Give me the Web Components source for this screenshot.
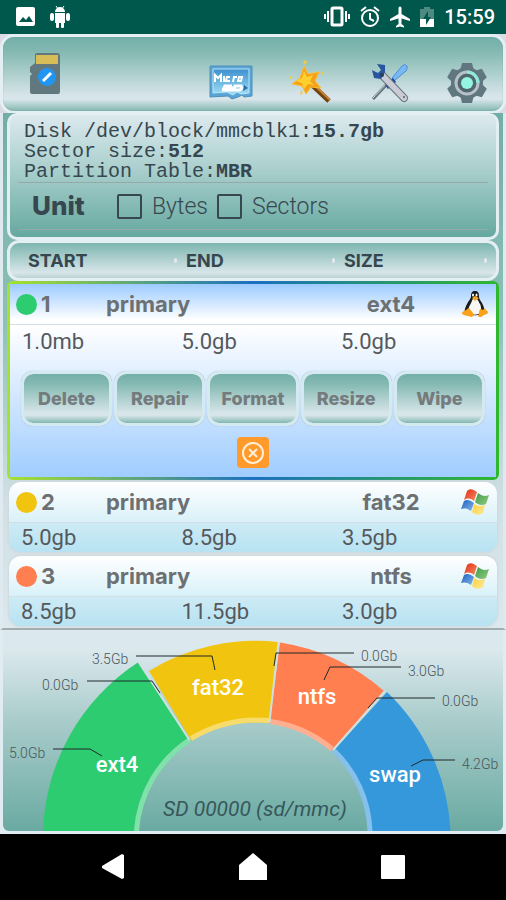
<!DOCTYPE html>
<html lang="en">
<head>
<meta charset="utf-8">
<meta name="viewport" content="width=device-width, initial-scale=1">
<title>Partitions</title>
<style>
  :root {
    --teal: #6caea5;
    --pale: #d9e6ec;
    --line: #e4eff4;
    --heading: Inter, 'Open Sans', sans-serif;
    --body: Roboto, 'Liberation Sans', sans-serif;
    --mono: 'Liberation Mono', 'DejaVu Sans Mono', monospace;
    --glass: linear-gradient(#73afa9 0%, #84b9b2 20%, #d5e4e8 78%, #d9e6ec 84%, #83b7b0 100%);
  }
  body {
    margin: 0;
    background: #000;
    font-family: var(--body);
    color: #37474f;
  }
</style>
</head>
<body>
<partition-app>
  <status-bar slot="status" time="15:59"></status-bar>
  <tool-bar slot="toolbar"></tool-bar>
  <disk-info path="/dev/block/mmcblk1" size="15.7gb" sector="512" table="MBR"></disk-info>
  <table-head></table-head>
  <partition-card number="1" type="primary" fs="ext4" color="#2ecc71" start="1.0mb" end="5.0gb" size="5.0gb" open>
    <action-button>Delete</action-button>
    <action-button>Repair</action-button>
    <action-button>Format</action-button>
    <action-button>Resize</action-button>
    <action-button>Wipe</action-button>
  </partition-card>
  <partition-card number="2" type="primary" fs="fat32" color="#f1c40f" start="5.0gb" end="8.5gb" size="3.5gb"></partition-card>
  <partition-card number="3" type="primary" fs="ntfs" color="#ff7f50" start="8.5gb" end="11.5gb" size="3.0gb"></partition-card>
  <usage-chart slot="chart">SD 00000 (sd/mmc)</usage-chart>
  <nav-bar slot="nav"></nav-bar>
</partition-app>

<script>
const TUX = `
  <svg viewBox="0 0 28 28" width="28" height="28" aria-hidden="true">
    <path d="M14 1c-3 0-4 2-4 5 0 3-2 4-4 8-2 4-3 7-2 9 2 3 17 3 19 0 1-3 0-6-2-10-2-3-3-4-3-7s-1-5-4-5z" fill="#17191c"/>
    <path d="M13 8c-2 1-2 4-4 7-2 3-2 7 1 9 2 1 7 1 9-1 2-3 1-7 0-9-2-3-2-6-6-6z" fill="#f7f7f5"/>
    <ellipse cx="12" cy="5" rx="1" ry="1.500" fill="#fff"/>
    <ellipse cx="15.500" cy="5" rx="1" ry="1.500" fill="#fff"/>
    <path d="M11 8l3-2 4 2-4 3z" fill="#f5a51d"/>
    <path d="M6 19c-1 2-5 2-5 4 0 3 6 2 9 4 2 0 3-2 2-4l-4-5z" fill="#faa21b"/>
    <path d="M20 19c-2-1-2 6-3 7 1 2 4 1 6-1 2-1 4-1 4-3 0-1-2-1-3-4-1 2-3 2-4 1z" fill="#faa21b"/>
  </svg>`;

const FLAG = `
  <svg viewBox="0 0 28 28" width="28" height="28" aria-hidden="true">
    <defs>
      <linearGradient id="r" x2="1" y2="1"><stop stop-color="#e02e18"/><stop offset="1" stop-color="#f7885f"/></linearGradient>
      <linearGradient id="g" x2="1" y2="1"><stop stop-color="#3d9c45"/><stop offset="1" stop-color="#93cb82"/></linearGradient>
      <linearGradient id="b" x2="1" y2="1"><stop stop-color="#1c5fbd"/><stop offset="1" stop-color="#86b8ea"/></linearGradient>
      <linearGradient id="y" x2="1" y2="1"><stop stop-color="#ffd23a"/><stop offset="1" stop-color="#fbe99c"/></linearGradient>
    </defs>
    <path d="M6 3c3-3 6-2 10 1l-3 9c-4-3-7-3-10-1z" fill="url(#r)"/>
    <path d="M17 5c4 3 7 4 11 2l-3 9c-4 2-8 1-11-2z" fill="url(#g)"/>
    <path d="M3 13c3-2 6-1 10 2l-3 8c-4-3-7-3-10-2z" fill="url(#b)"/>
    <path d="M13 16c3 2 7 3 11 1l-2 8c-4 3-8 2-11-1z" fill="url(#y)"/>
  </svg>`;

/** Small helper: every element keeps its markup in an open shadow root. */
class BaseElement extends HTMLElement {
  connectedCallback() {
    if (!this.shadowRoot) {
      this.attachShadow({ mode: 'open' }).innerHTML = this.render();
    }
  }

  attr(name) {
    return this.getAttribute(name) || '';
  }
}

class PartitionApp extends BaseElement {
  render() {
    return `
      <style>
        :host {
          display: flex;
          flex-direction: column;
          min-height: 100vh;
        }
        .toolbar {
          background: #d9dde3;
          margin-bottom: -1px;
        }
        main {
          display: flex;
          flex-direction: column;
          padding: 0 4px;
          border: solid #dfeaf0;
          border-width: 0 3px;
          border-bottom: 2px solid #a4acb0;
          background: linear-gradient(#72ada7, #8cc0b8 40%, #cfe0e5 75%, #dbe8ed);
        }
        ::slotted([slot="nav"]) { flex: 1; }
      </style>
      <slot name="status"></slot>
      <div class="toolbar"><slot name="toolbar"></slot></div>
      <main><slot></slot></main>
      <slot name="chart"></slot>
      <slot name="nav"></slot>`;
  }
}

class StatusBar extends BaseElement {
  render() {
    return `
      <style>
        :host {
          display: flex;
          align-items: center;
          gap: 10px;
          height: 34px;
          padding: 0 11px 0 15px;
          background: #00574b;
          color: #fff;
          box-sizing: border-box;
        }
        .gap { flex: 1; }
        time { font-size: 20px; font-weight: 500; line-height: 34px; }
        svg { display: block; }
      </style>
      <svg width="24" height="20" viewBox="0 0 24 20" aria-hidden="true">
        <rect x="1" width="19" height="19" rx="2" fill="#fff"/>
        <path d="M4 15l4-5 3 3 3-4 4 6z" fill="#00574b"/>
      </svg>
      <svg width="22" height="22" viewBox="0 0 22 22" fill="#fff" aria-hidden="true">
        <path d="M6 6a5 5 0 0 1 10 0zM6 7h10v10H6z"/>
        <path d="M7 0l2 3M15 0l-2 3" stroke="#fff"/>
        <rect x="1" y="7" width="4" height="8" rx="2"/><rect x="17" y="7" width="4" height="8" rx="2"/>
        <rect x="7" y="15" width="3" height="7" rx="1"/><rect x="12" y="15" width="3" height="7" rx="1"/>
      </svg>
      <span class="gap"></span>
      <svg width="26" height="22" viewBox="0 0 26 22" fill="none" stroke="#fff" stroke-width="2" aria-hidden="true">
        <rect x="8" y="2" width="10" height="17" rx="1" stroke-width="3"/>
        <path d="M4 5v11M1 8v5M22 5v11M25 8v5"/>
      </svg>
      <svg width="20" height="22" viewBox="0 0 20 22" fill="none" stroke="#fff" stroke-width="2" aria-hidden="true">
        <circle cx="10" cy="12" r="8"/><path d="M10 7v6l4 2M1 5l5-4M19 5l-5-4"/>
      </svg>
      <svg width="20" height="22" viewBox="0 0 20 22" fill="#fff" aria-hidden="true">
        <path d="M8.500 2a1.500 1.500 0 0 1 3 0v6l8.500 5v2l-8.500-2.500V18l2.500 2v1.500L10 20.500 6 21.500V20l2.500-2v-5.500L0 15v-2l8.500-5z"/>
      </svg>
      <svg width="14" height="22" viewBox="0 0 14 22" aria-hidden="true">
        <path d="M4 1h6v2h4v10H0V3h4z" fill="#4d8a81"/>
        <path d="M0 13h14v8H0z" fill="#fff"/>
        <path d="M8 5l-5 8h3v6l5-8H8z" fill="#00574b"/>
      </svg>
      <time>${this.attr('time')}</time>`;
  }
}

class ToolBar extends BaseElement {
  render() {
    return `
      <style>
        :host {
          display: flex;
          align-items: center;
          height: 80px;
          padding: 0 14px 0 24px;
          box-sizing: border-box;
          border: 3px solid var(--line);
          border-radius: 14px;
          background: var(--glass);
          box-shadow: inset 0 0 1px #5b8d88;
        }
        button {
          display: block;
          border: 0;
          padding: 0;
          background: none;
          line-height: 0;
        }
        .gap { flex: 1; }
        .actions { display: flex; gap: 34px; padding-top: 16px; }
      </style>
      <button aria-label="Edit card">
        <svg width="36" height="44" viewBox="0 0 36 44">
          <path d="M10 1h20q3 0 3 3v36q0 2-2 2H5q-2 0-2-2V24l2-2-2-2v-5l5-4V3q0-2 2-2z" fill="#61797e"/>
          <rect x="9" y="3" width="22" height="9" fill="#d6bd58"/>
          <circle cx="20" cy="25" r="9" fill="#2195f3"/>
          <path d="M16 29l8-8" stroke="#fff" stroke-width="3"/>
        </svg>
      </button>
      <span class="gap"></span>
      <div class="actions">
        <button aria-label="Micro SD">
          <svg width="44" height="44" viewBox="0 0 44 44">
            <defs><linearGradient id="s" y2="1" x2="0"><stop stop-color="#3e8fce"/><stop offset="1" stop-color="#9fe0f6"/></linearGradient></defs>
            <path d="M1 6h42v30l-8 1-2-2-4 2-3 1-3 1-4-3-18 1z" fill="#5aa5d6" stroke="#4c8fb8"/>
            <path d="M4 9h36v24l-8 1-4-2-4 3-6-3-14 1z" fill="url(#s)" stroke="#b9e6f8"/>
            <g fill="none" stroke="#fff" stroke-width="2">
              <path d="M6 22v-7l3 3 3-3v7M15 16v6M21 17h-3l-1 4h4M24 22l1-5h3M30 17h3l-1 4h-3z"/>
              <path d="M23 26h-7l-1 2h8l-1 2h-9M26 26h6l1 2-2 2h-6z" stroke-width="3"/>
            </g>
            <path d="M35 25l4 3-5 3z" fill="#286dab"/>
          </svg>
        </button>
        <button aria-label="Wizard">
          <svg width="46" height="44" viewBox="0 0 46 44">
            <path d="M23 23l19 18" stroke="#73430f" stroke-width="5"/>
            <path d="M24 22l19 18" stroke="#c28537" stroke-width="2"/>
            <path d="M17 6l4 8 11-2-4 9 6 7-10-1-5 7-4-8-10-2 8-6z" fill="#f5a21b" stroke="#ffbd35" stroke-linejoin="round"/>
            <path d="M17 11l3 6 6-2-3 6 4 4-6-1-4 5-2-6-6-2 6-3z" fill="#ffd02f"/>
            <path d="M18 0l2 2-2 3-2-3zM35 11l2 3-3 1zM2 16l4 1-3 2zM14 30l2 3-3 2z" fill="#f5c744"/>
          </svg>
        </button>
        <button aria-label="Tools">
          <svg width="44" height="44" viewBox="0 0 44 44">
            <path d="M6 39l15-16" stroke="#65747a" stroke-width="3"/>
            <path d="M6 38l15-16" stroke="#cbd9dd"/>
            <path d="M25 18L35 6q3-3 5 0 1 2-1 5L27 21z" fill="#78b9f4" stroke="#4e8fd3"/>
            <path d="M18 25l8-7 3 4-8 7z" fill="#1c449c"/>
            <path d="M15 15l22 23" stroke="#68747e" stroke-width="8" stroke-linecap="round"/>
            <path d="M15 15l22 23" stroke="#c9ccd5" stroke-width="6" stroke-linecap="round"/>
            <path d="M5 10l6 3 3-3-4-6 8 1v7l-4 7-7-1z" fill="#2854a0"/>
            <circle cx="37" cy="37" r="1" fill="#56636f"/>
            <circle cx="15" cy="15" r="2" fill="#293e58"/>
          </svg>
        </button>
        <button aria-label="Settings">
          <svg width="44" height="44" viewBox="0 0 44 44">
            <g fill="#607780">
              <circle cx="22" cy="23" r="16"/>
              <path d="M17 3h10l2 8H15zM17 43h10l2-8H15z"/>
              <path d="M17 3h10l2 8H15zM17 43h10l2-8H15z" transform="rotate(60 22 23)"/>
              <path d="M17 3h10l2 8H15zM17 43h10l2-8H15z" transform="rotate(-60 22 23)"/>
            </g>
            <circle cx="22" cy="23" r="11" fill="#52676e" stroke="#b6c2c8" stroke-width="3"/>
            <path d="M22 12a11 11 0 0 1 11 11" fill="none" stroke="#8eeadb" stroke-width="3"/>
            <circle cx="22" cy="23" r="6" fill="#94f5e2"/>
          </svg>
        </button>
      </div>`;
  }
}

class DiskInfo extends BaseElement {
  render() {
    return `
      <style>
        :host {
          display: block;
          padding: 7px 8px;
          border: solid var(--line);
          border-width: 2px 3px 3px;
          border-radius: 10px;
          background: linear-gradient(#dce9ee, #a9cfcd 45%, #65a89f);
        }
        p {
          margin: 0;
          padding-left: 6px;
          font: 20px/20px var(--mono);
        }
        form {
          display: flex;
          align-items: center;
          height: 46px;
          padding-left: 14px;
          border: solid #94a9a8;
          border-width: 1px 0;
        }
        strong { width: 85px; font: 800 26px/28px var(--heading); }
        label {
          display: flex;
          align-items: center;
          width: 100px;
          gap: 10px;
          font-size: 23px;
          font-weight: 300;
        }
        input {
          appearance: none;
          flex: none;
          width: 25px;
          height: 25px;
          margin: 0;
          border: 2px solid #37474f;
          border-radius: 2px;
        }
      </style>
      <p>Disk ${this.attr('path')}:<b>${this.attr('size')}</b></p>
      <p>Sector size:<b>${this.attr('sector')}</b></p>
      <p>Partition Table:<b>${this.attr('table')}</b></p>
      <form>
        <strong>Unit</strong>
        <label><input type="checkbox">Bytes</label>
        <label><input type="checkbox">Sectors</label>
      </form>`;
  }
}

class TableHead extends BaseElement {
  render() {
    return `
      <style>
        :host {
          display: grid;
          grid-template-columns: 1fr 1fr 152px;
          align-items: center;
          height: 41px;
          padding-left: 18px;
          box-sizing: border-box;
          border: 3px solid var(--line);
          border-radius: 12px;
          background: linear-gradient(#7db6af, #d8e6ea 85%, #b9d3d3);
          font: 700 18px/22px var(--heading);
        }
        span {
          display: flex;
          align-items: center;
          justify-content: space-between;
        }
        /* column grip */
        span::after {
          content: '';
          width: 3px;
          height: 5px;
          margin-right: 9px;
          border-radius: 2px;
          background: #e3e6ec;
        }
      </style>
      <span>START</span><span>END</span><span>SIZE</span>`;
  }
}

class ActionButton extends BaseElement {
  render() {
    return `
      <style>
        :host { display: block; }
        button {
          width: 100%;
          height: 55px;
          padding: 0;
          border: 3px solid #d5e9f1;
          border-radius: 12px;
          background: var(--glass) padding-box, #d5e9f1;
          box-shadow: 0 0 1px #8fa9b5;
          color: #757b7d;
          font: 800 18px/20px var(--heading);
        }
      </style>
      <button><slot></slot></button>`;
  }
}

class PartitionCard extends BaseElement {
  render() {
    const open = this.hasAttribute('open');
    return `
      <style>
        :host {
          display: block;
          margin: 2px;
          border-radius: 12px;
          overflow: hidden;
          background: #c0e5f3;
          box-shadow: 0 0 2px 1px #d0d8db;
        }
        :host([open]) {
          margin: 0;
          border-radius: 6px;
          padding: 3px;
          background: linear-gradient(90deg, #a6e22e, #1b6fc0 50%, #2eb82e);
          box-shadow: none;
        }
        header {
          display: grid;
          grid-template-columns: 25px 65px 1fr 120px 38px;
          align-items: center;
          height: 41px;
          padding: 0 8px 0 7px;
          box-sizing: border-box;
          border-bottom: 1px solid #d3dfe4;
          background: linear-gradient(#fff, #d9f1f9);
          color: #6c7072;
          font: 700 22px/26px var(--heading);
        }
        :host([open]) header {
          padding: 0 7px 0 6px;
          background: linear-gradient(#9ccbff, #fff 90%);
        }
        .dot {
          width: 21px;
          height: 21px;
          border-radius: 50%;
          background: ${this.attr('color')};
        }
        .fs { text-align: center; }
        .icon { display: grid; justify-content: end; }
        .values {
          display: grid;
          grid-template-columns: 1fr 1fr 155px;
          padding-left: 12px;
          font-size: 22px;
          line-height: 29px;
          color: #55595c;
          background: linear-gradient(#cdebf5, #b8e2f2);
        }
        :host([open]) .values { line-height: 33px; background: none; }
        .body { background: linear-gradient(#fff, #a0cdff); }
        .actions {
          display: grid;
          grid-template-columns: repeat(5, 1fr);
          gap: 2px;
          padding: 13px 11px 11px;
        }
        .close {
          display: block;
          width: 32px;
          height: 31px;
          margin: 0 auto;
          padding: 0;
          border: 0;
          border-radius: 4px;
          background: #ff9a2b;
          line-height: 0;
        }
        footer { padding-bottom: 9px; }
      </style>
      <header>
        <span class="dot"></span>
        <span>${this.attr('number')}</span>
        <span>${this.attr('type')}</span>
        <span class="fs">${this.attr('fs')}</span>
        <span class="icon">${this.attr('fs') === 'ext4' ? TUX : FLAG}</span>
      </header>
      <div class="body">
        <div class="values">
          <span>${this.attr('start')}</span>
          <span>${this.attr('end')}</span>
          <span>${this.attr('size')}</span>
        </div>
        ${open ? `
        <div class="actions"><slot></slot></div>
        <footer>
          <button class="close" aria-label="Close">
            <svg width="32" height="31" viewBox="0 0 32 31" fill="none" stroke="#fff0dc" stroke-width="2">
              <circle cx="16" cy="16" r="10"/><path d="M12 12l8 8M20 12l-8 8"/>
            </svg>
          </button>
        </footer>` : ''}
      </div>`;
  }
}

/** Half-donut of the disk; the lighter inner rim is stroked over each slice. */
class UsageChart extends BaseElement {
  render() {
    return `
      <style>
        :host {
          display: block;
          border: solid #e0ebf2;
          border-width: 0 3px 3px;
          background: #e0ebf2;
        }
        .panel {
          border-radius: 0 0 6px 6px;
          background: linear-gradient(#dbe8ed 10%, #a9cccb 45%, #6aaaa2);
          overflow: hidden;
        }
        svg { display: block; width: 100%; height: auto; }
        .name { fill: #fff; font-size: 22px; font-weight: 500; text-anchor: middle; }
        .size { fill: #4a565b; font-size: 14px; font-weight: 300; }
        .title { fill: #37575a; font-size: 21px; font-style: italic; text-anchor: middle; }
        .lead { fill: none; stroke: #20292b; }
      </style>
      <div class="panel">
      <svg viewBox="3 629 500 201" role="img" aria-label="Disk usage">
        <path d="M43 830A210 210 0 0 1 138.500 661L188 737A120 120 0 0 0 134 830z" fill="#2ecc71"/>
        <path d="M136.500 830A119 119 0 0 1 189.500 739" fill="none" stroke="#7fe3a9" stroke-width="5"/>
        <path d="M149 670A205 205 0 0 1 278 641L269.500 722A128 128 0 0 0 191 739z" fill="#f1c40f"/>
        <path d="M191 737.500A128 128 0 0 1 269.500 719.500" fill="none" stroke="#f7dc6b" stroke-width="5"/>
        <path d="M280 641.500A205 205 0 0 1 384 690L333 749A118 118 0 0 0 270 719z" fill="#ff7f50"/>
        <path d="M270.500 720.500A121 121 0 0 1 332 748" fill="none" stroke="#ffaf91" stroke-width="5"/>
        <path d="M387 691A207 207 0 0 1 450.500 830H370.500A120 120 0 0 0 335 748z" fill="#3498db"/>
        <path d="M334 749.500A118 118 0 0 1 370 830" fill="none" stroke="#85c1ec" stroke-width="5"/>
        <path d="M138.500 661L189.500 739M278.500 641L269.500 721M385 690L333 749" stroke="#cfe0df" stroke-width="2"/>
        <path class="lead" d="M136 655h76l3 14M87 680h65l8 12M53 748h37l12 7M354 652h-78l-2 13M401 666h-71l-6 13M435 697h-58l-9 10M455 759h-32l-12 6"/>
        <text class="size" x="92" y="663">3.5Gb</text>
        <text class="size" x="42" y="689">0.0Gb</text>
        <text class="size" x="9" y="757">5.0Gb</text>
        <text class="size" x="361" y="660">0.0Gb</text>
        <text class="size" x="408" y="675">3.0Gb</text>
        <text class="size" x="442" y="705">0.0Gb</text>
        <text class="size" x="462" y="768">4.2Gb</text>
        <text class="name" x="117" y="771">ext4</text>
        <text class="name" x="218" y="694">fat32</text>
        <text class="name" x="317" y="703">ntfs</text>
        <text class="name" x="395" y="781">swap</text>
        <text class="title" x="255" y="815">${this.textContent}</text>
      </svg>
      </div>`;
  }
}

class NavBar extends BaseElement {
  render() {
    return `
      <style>
        :host {
          display: flex;
          align-items: center;
          justify-content: center;
          gap: 108px;
          min-height: 66px;
          background: #000;
        }
        button {
          display: block;
          border: 0;
          padding: 0;
          background: none;
          line-height: 0;
        }
        svg { fill: #fff; }
      </style>
      <button aria-label="Back"><svg width="32" height="28"><path d="M5 13L25 1l2 1v23l-2 1L5 15z"/></svg></button>
      <button aria-label="Home"><svg width="32" height="30"><path d="M16 1L30 13v15H2V13z"/></svg></button>
      <button aria-label="Recent"><svg width="32" height="28"><rect x="4" y="2" width="24" height="24" rx="1"/></svg></button>`;
  }
}

customElements.define('action-button', ActionButton);
customElements.define('partition-card', PartitionCard);
customElements.define('table-head', TableHead);
customElements.define('disk-info', DiskInfo);
customElements.define('tool-bar', ToolBar);
customElements.define('status-bar', StatusBar);
customElements.define('usage-chart', UsageChart);
customElements.define('nav-bar', NavBar);
customElements.define('partition-app', PartitionApp);
</script>
</body>
</html>
